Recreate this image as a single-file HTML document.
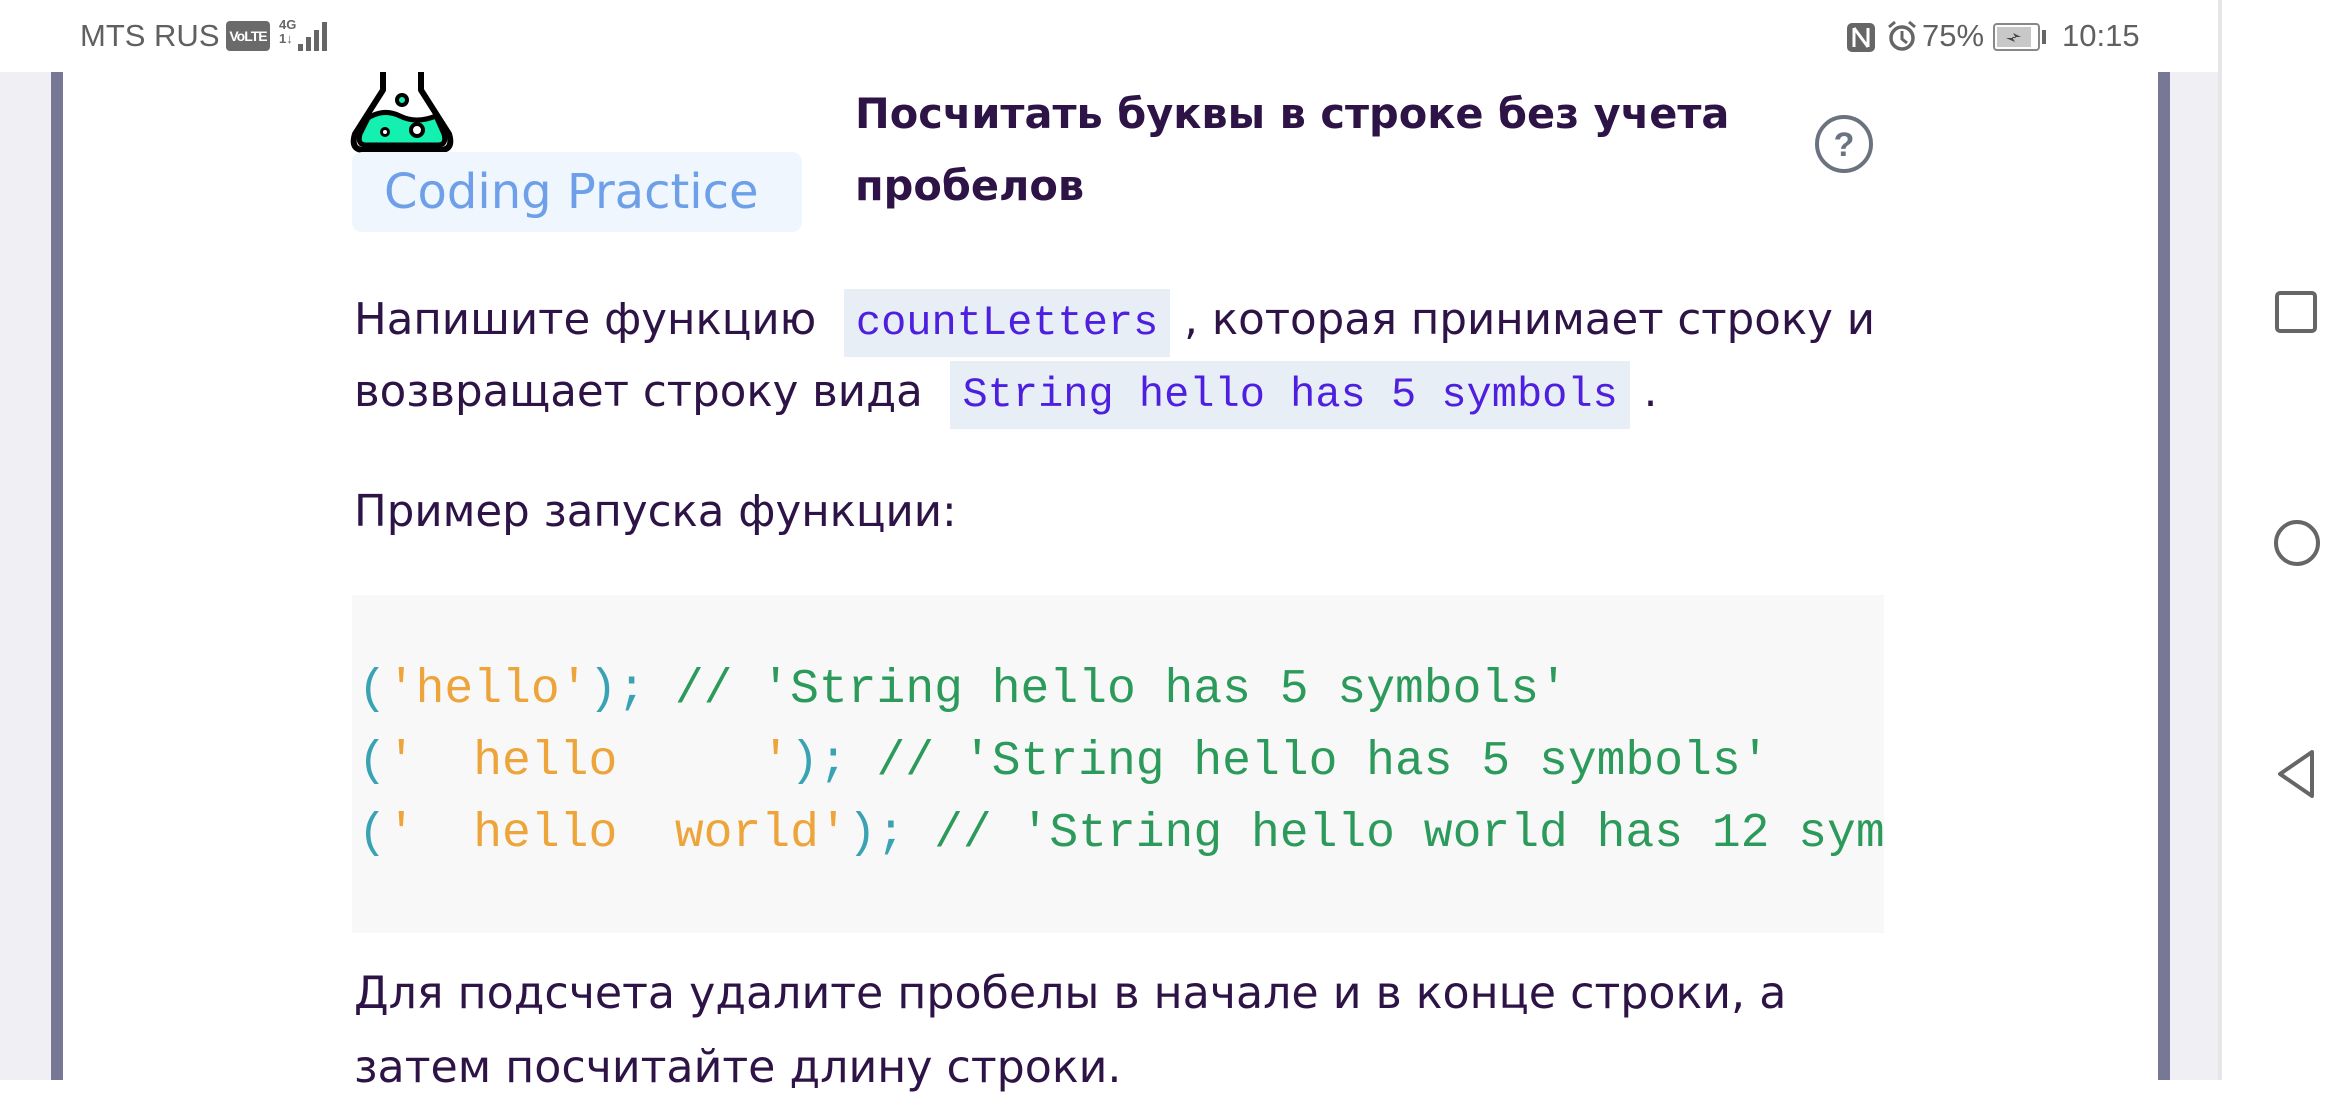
<!DOCTYPE html>
<html><head><meta charset="utf-8"><style>
*{margin:0;padding:0;box-sizing:border-box}
body{width:2340px;height:1080px;overflow:hidden;background:#fff;position:relative;font-family:"DejaVu Sans","Liberation Sans",sans-serif}
.abs{position:absolute;white-space:nowrap}
.sb{color:#606060;font-size:31px;top:18px;font-family:"Liberation Sans",sans-serif}
.page{position:absolute;left:0;top:72px;width:2218px;height:1008px;background:#efeff4}
.card{position:absolute;left:51px;top:72px;width:2119px;height:1008px;background:#fff;border-left:12px solid #777896;border-right:12px solid #777896}
.nav{position:absolute;left:2218px;top:0;width:122px;height:1080px;background:#fff;border-left:4px solid #e6e6e6}
.t{color:#2d1346;font-size:43.5px}
.ic{background:#e8eef5;color:#4f1fe0;font-family:"Liberation Mono","DejaVu Sans Mono",monospace;font-size:42px;padding:0 12px;line-height:68px;display:inline-block}
.code{position:absolute;left:352px;top:595px;width:1532px;height:338px;background:#f8f8f8;overflow:hidden}
.cl{position:absolute;left:6px;font-family:"Liberation Mono","DejaVu Sans Mono",monospace;font-size:48px;white-space:pre}
.p{color:#3aa3b3}.s{color:#eda43a}.c{color:#2b9a5a}
</style></head><body>
<div class="page"></div>
<div class="card"></div>
<div class="nav">
<svg class="abs" style="left:52px;top:290px" width="44" height="44"><rect x="3" y="3" width="38" height="38" rx="3" fill="none" stroke="#666" stroke-width="4"/></svg>
<svg class="abs" style="left:50px;top:518px" width="50" height="50"><circle cx="25" cy="25" r="21" fill="none" stroke="#666" stroke-width="4"/></svg>
<svg class="abs" style="left:52px;top:748px" width="44" height="52"><path d="M38 4 L6 26 L38 48 Z" fill="none" stroke="#666" stroke-width="4" stroke-linejoin="round"/></svg>
</div>
<!-- status bar -->
<div class="abs sb" style="left:80px">MTS RUS</div>
<div class="abs" style="left:226px;top:21px;width:44px;height:30px;background:#6a6a6a;border-radius:4px;color:#fff;font-size:14px;font-weight:bold;line-height:30px;text-align:center;font-family:'Liberation Sans Narrow','Liberation Sans',sans-serif;letter-spacing:-1px">VoLTE</div>
<div class="abs" style="left:279px;top:18px;color:#666;font-size:13px;font-weight:bold;line-height:14px;font-family:'Liberation Sans',sans-serif">4G<br>1↓</div>
<svg class="abs" style="left:296px;top:20px" width="35" height="32"><g fill="#666"><rect x="2" y="24" width="5" height="7"/><rect x="10" y="17" width="5" height="14"/><rect x="18" y="10" width="5" height="21"/><rect x="26" y="2" width="5" height="29"/></g></svg>
<svg class="abs" style="left:1845px;top:21px" width="32" height="32"><rect x="2" y="2" width="28" height="29" rx="5" fill="#666"/><path d="M9 7v19M9 7l14 19M23 7v19" stroke="#fff" stroke-width="3" fill="none"/></svg>
<svg class="abs" style="left:1886px;top:20px" width="32" height="32"><circle cx="16" cy="18" r="11" fill="none" stroke="#666" stroke-width="3.5"/><path d="M16 11v8l5 4M3 7l6-5M29 7l-6-5" stroke="#666" stroke-width="3" fill="none"/></svg>
<div class="abs sb" style="left:1922px">75%</div>
<svg class="abs" style="left:1992px;top:22px" width="56" height="30"><rect x="2" y="2" width="45" height="26" rx="3" fill="none" stroke="#888" stroke-width="2"/><rect x="5" y="5" width="34" height="20" fill="#c8c8c8"/><path d="M14 16h10l-3-5 8 4h-9l3 5z" fill="#444"/><rect x="50" y="8" width="4" height="14" fill="#666"/></svg>
<div class="abs sb" style="left:2062px">10:15</div>
<!-- header -->
<svg class="abs" style="left:350px;top:72px" width="104" height="84" viewBox="0 0 104 84"><path d="M33 0 V18 L5 62 Q0 78 14 78 H90 Q104 78 99 62 L71 18 V0" fill="#fff" stroke="#000" stroke-width="6" stroke-linejoin="round"/><path d="M18 46 Q34 36 50 44 Q66 52 86 44 L94 62 Q97 73 88 73 H16 Q7 73 10 62 Z" fill="#14f0b0" stroke="#000" stroke-width="5"/><circle cx="52" cy="28" r="5" fill="#14f0b0" stroke="#000" stroke-width="4"/><circle cx="35" cy="60" r="3.5" fill="#fff" stroke="#000" stroke-width="3"/><circle cx="67" cy="58" r="6" fill="#fff" stroke="#000" stroke-width="4"/></svg>
<div class="abs" style="left:352px;top:152px;width:450px;height:80px;background:#f0f6fe;border-radius:10px;color:#6e9fe9;font-size:48px;line-height:80px;padding-left:32px">Coding Practice</div>
<div class="abs" style="left:855px;top:78px;color:#2d1346;font-size:41.5px;font-weight:bold;line-height:72px">Посчитать буквы в строке без учета<br>пробелов</div>
<svg class="abs" style="left:1812px;top:112px" width="64" height="64"><circle cx="32" cy="32" r="27" fill="none" stroke="#6b7280" stroke-width="4"/><text x="32" y="44" text-anchor="middle" font-family="Liberation Sans" font-weight="bold" font-size="34" fill="#6b7280">?</text></svg>
<!-- paragraph -->
<div class="abs t" style="left:354px;top:284px;line-height:72px">Напишите функцию &nbsp;<span class="ic">countLetters</span> , которая принимает строку и</div>
<div class="abs t" style="left:354px;top:356px;line-height:72px">возвращает строку вида &nbsp;<span class="ic">String hello has 5 symbols</span> .</div>
<div class="abs t" style="left:354px;top:476px;line-height:72px">Пример запуска функции:</div>
<div class="code" style="width:1532px">
<div class="cl" style="top:68px"><span class="p">(</span><span class="s">'hello'</span><span class="p">);</span> <span class="c">// 'String hello has 5 symbols'</span></div>
<div class="cl" style="top:140px"><span class="p">(</span><span class="s">'  hello     '</span><span class="p">);</span> <span class="c">// 'String hello has 5 symbols'</span></div>
<div class="cl" style="top:212px"><span class="p">(</span><span class="s">'  hello  world'</span><span class="p">);</span> <span class="c">// 'String hello world has 12 symbols'</span></div>
</div>
<div class="abs t" style="left:354px;top:957px;line-height:74px;font-size:44.3px">Для подсчета удалите пробелы в начале и в конце строки, а<br>затем посчитайте длину строки.</div>
</body></html>
